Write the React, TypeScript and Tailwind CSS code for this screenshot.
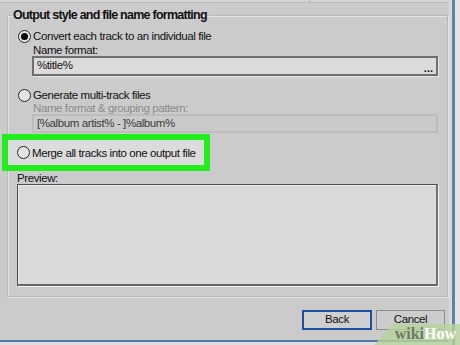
import React from "react";

const ui = { fontFamily: '"Liberation Sans", Arial, sans-serif' };
const txt = "text-[11.5px] tracking-[-0.4px]";

function Radio({ checked }: { checked?: boolean }) {
  return (
    <span className="w-[13px] h-[13px] rounded-full border-[1.5px] border-[#262626] bg-[#e4e4e4] flex items-center justify-center shrink-0">
      {checked && <span className="w-[7px] h-[7px] rounded-full bg-black" />}
    </span>
  );
}

function RadioRow({ label, checked }: { label: string; checked?: boolean }) {
  return (
    <div className="flex items-center gap-[2px] h-[14px]">
      <Radio checked={checked} />
      <span className={`${txt} leading-[14px] text-[#111] whitespace-nowrap`}>{label}</span>
    </div>
  );
}

export default function App() {
  return (
    <div className="relative w-[460px] h-[345px] bg-[#cbcbcb] overflow-hidden flex" style={ui}>
      <div className="w-[449px] flex flex-col">
        <div className="h-[3px] bg-[#d3d3d3] border-b border-[#bdbdbd] flex">
          <div className="w-[310px] border-r border-[#b5b5b5]" />
        </div>

        <fieldset className="mt-[5px] ml-[7px] w-[441px] border border-[#bababa] shadow-[inset_1px_1px_0_#e2e2e2,1px_1px_0_#e2e2e2]">
          <legend className="ml-[3px] px-[2px] text-[12.5px] tracking-[-0.75px] leading-[14px] font-bold text-[#111]">
            Output style and file name formatting
          </legend>

          <div className="pl-[10px] pt-[7px] pb-[10px] flex flex-col">
            <RadioRow label="Convert each track to an individual file" checked />
            <div className={`ml-[15px] mt-[1px] h-[12px] ${txt} leading-[12px] text-[#111]`}>Name format:</div>
            <div className="ml-[14px] w-[406px] h-[20px] border-2 border-[#6e6e6e] bg-[#dbdbdb] shadow-[1px_1px_0_#e6e6e6] flex items-center justify-between pl-[3px] pr-[3px]">
              <span className={`${txt} text-[#111]`}>%title%</span>
              <span className="text-[11px] font-bold text-[#111] leading-none pt-[4px]">...</span>
            </div>

            <div className="mt-[12px]">
              <RadioRow label="Generate multi-track files" />
            </div>
            <div className={`ml-[15px] h-[12px] ${txt} leading-[12px] text-[#8b8b8b]`}>Name format &amp; grouping pattern:</div>
            <div className="ml-[14px] w-[406px] h-[19px] border-2 border-[#bdbdbd] bg-[#cacaca] flex items-center pl-[3px]">
              <span className={`${txt} text-[#3a3a3a]`}>[%album artist% - ]%album%</span>
            </div>

            <div className="mt-[1px] -ml-[16px] w-[208px] h-[37px] border-[6px] border-[#22ee1e] bg-[#dcdcdc] flex items-center pl-[9px]">
              <RadioRow label="Merge all tracks into one output file" />
            </div>

            <div className={`-ml-[1px] mt-[1px] h-[12px] ${txt} leading-[12px] text-[#111]`}>Preview:</div>
            <div className="-ml-[1px] w-[421px] h-[102px] border border-[#4d4d4d] border-r-2 border-b-2 border-r-[#727272] border-b-[#666] bg-[#dadada] shadow-[1px_1px_0_#f2f2f2,inset_1px_1px_0_#ececec]" />
          </div>
        </fieldset>

        <div className="mt-[13px] pr-[4px] flex justify-end gap-[4px]">
          <button className={`w-[70px] h-[20px] border-2 border-[#1f4fa0] bg-[#cfcfcf] ${txt} text-[#111] leading-none`}>Back</button>
          <button className={`w-[69px] h-[20px] border border-[#8e8e8e] bg-[#cccccc] ${txt} text-[#111] leading-none`}>Cancel</button>
        </div>

        <div className="mt-auto h-[2px] bg-[#4f79a8]" />
        <div className="h-[3px] bg-[#dedede]" />
      </div>
      <div className="w-[3px] bg-[#d9d9d9]" />
      <div className="w-[3px] bg-[#5a82ad]" />
      <div className="flex-1 bg-[#e3e3e3]" />

      <div className="absolute right-0 bottom-0 w-[86px] h-[21px] bg-[#b7d39a]/80 [clip-path:polygon(22%_0,100%_0,100%_100%,0_100%)] flex items-end justify-end pr-[4px] pb-[3px]">
        <span className="text-[16px] font-bold leading-none" style={{ fontFamily: '"Liberation Serif", Georgia, serif' }}>
          <span className="text-[#6d7a66]">wiki</span>
          <span className="text-white">How</span>
        </span>
      </div>
    </div>
  );
}
